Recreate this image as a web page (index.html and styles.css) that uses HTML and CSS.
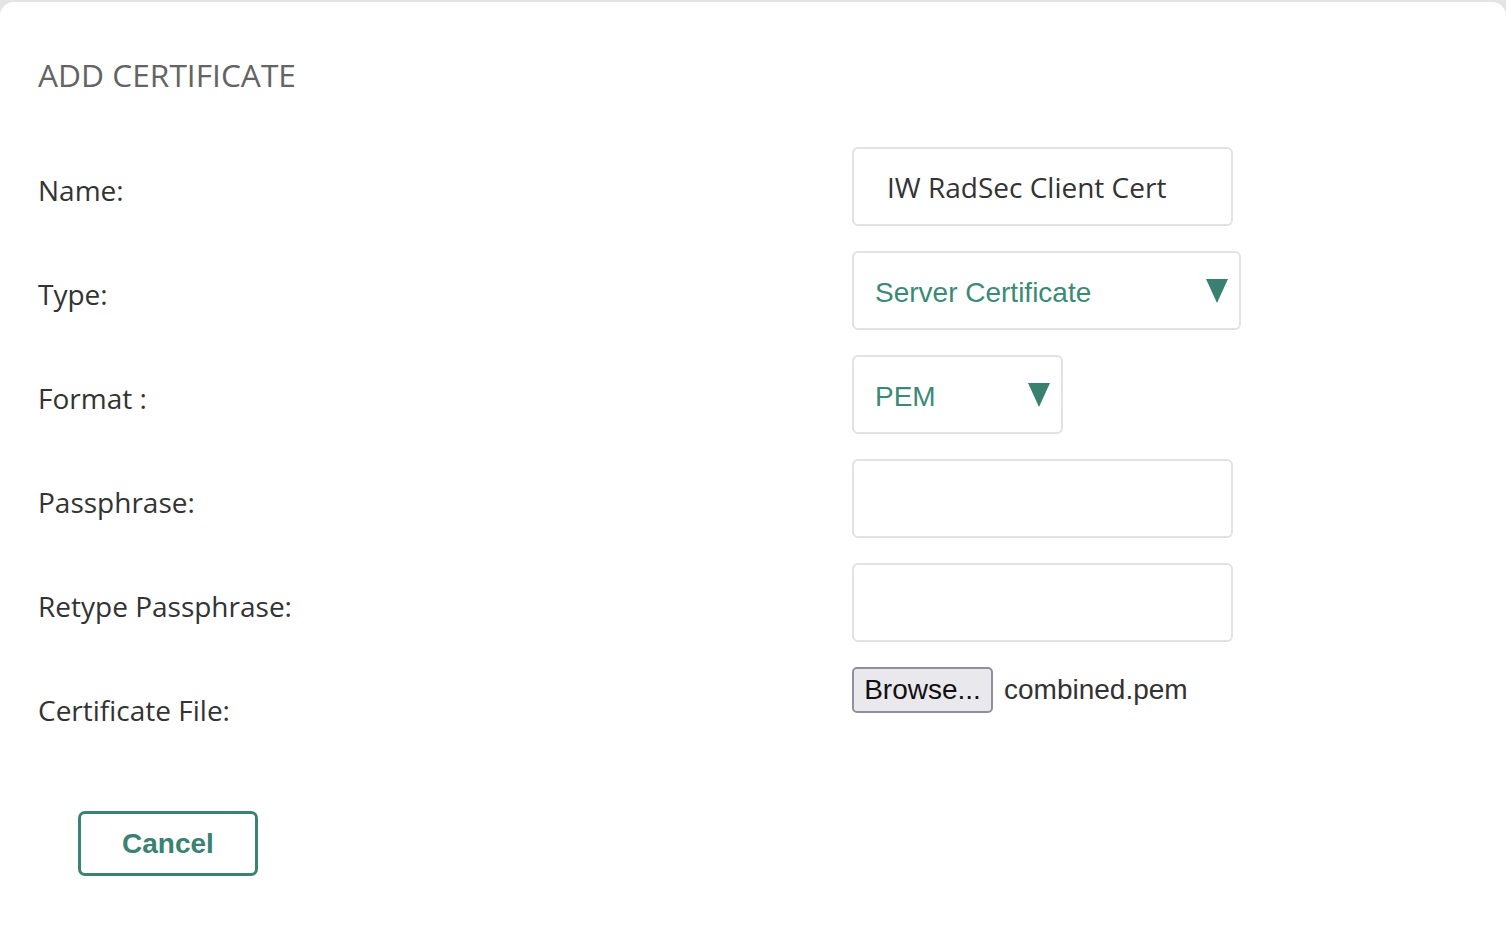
FILE: index.html
```html
<!DOCTYPE html>
<html>
<head>
<meta charset="utf-8">
<link rel="stylesheet" href="styles.css">
</head>
<body>
<div class="card">
  <h1 class="title">ADD CERTIFICATE</h1>
  <div class="form">
    <div class="label">Name:</div>
    <div class="field"><div class="input text">IW RadSec Client Cert</div></div>

    <div class="label">Type:</div>
    <div class="field"><div class="input select wide"><span>Server Certificate</span><span class="arrow"></span></div></div>

    <div class="label">Format :</div>
    <div class="field"><div class="input select small"><span>PEM</span><span class="arrow"></span></div></div>

    <div class="label">Passphrase:</div>
    <div class="field"><div class="input"></div></div>

    <div class="label">Retype Passphrase:</div>
    <div class="field"><div class="input"></div></div>

    <div class="label">Certificate File:</div>
    <div class="field file"><span class="browse">Browse...</span><span class="filename">combined.pem</span></div>
  </div>
  <div class="actions">
    <button class="cancel">Cancel</button>
  </div>
</div>
</body>
</html>
```

FILE: styles.css
```css
html, body {
  margin: 0;
  padding: 0;
  background: #e4e4e4;
  height: 100%;
  overflow: hidden;
}
body {
  padding-top: 2px;
  box-sizing: border-box;
}
.card {
  background: #fff;
  border-radius: 14px 14px 0 0;
  height: 936px;
  padding: 0 38px;
  box-sizing: border-box;
  font-family: "Open Sans", sans-serif;
}
.title {
  margin: 0;
  padding-top: 51px;
  font-size: 31.7px;
  font-weight: 400;
  color: #646464;
  line-height: 44px;
  height: 94px;
}
.form {
  display: grid;
  grid-template-columns: 814px 1fr;
  grid-auto-rows: 79px;
  row-gap: 25px;
}
.label {
  font-size: 28px;
  color: #333;
  line-height: 38px;
  padding-top: 24px;
}
.field {
  display: flex;
  align-items: flex-start;
}
.input {
  box-sizing: border-box;
  width: 381px;
  height: 79px;
  border: 2px solid #e2e2e2;
  border-radius: 6px;
  display: flex;
  align-items: center;
}
.input.text {
  padding-left: 33px;
  font-size: 28px;
  color: #333;
}
.select {
  font-family: "Liberation Sans", Arial, sans-serif;
  font-size: 28px;
  color: #3a8a76;
  padding-left: 21px;
  padding-right: 11px;
  justify-content: space-between;
}
.select > span:first-child {
  padding-top: 4px;
}
.select.wide { width: 389px; }
.select.small { width: 211px; }
.arrow {
  width: 0;
  height: 0;
  border-left: 11px solid transparent;
  border-right: 11px solid transparent;
  border-top: 24px solid #3a8070;
  margin-top: 1px;
}
.file {
  align-items: center;
  height: 46px;
  font-family: "Liberation Sans", Arial, sans-serif;
  font-size: 28px;
}
.browse {
  box-sizing: border-box;
  height: 46px;
  width: 141px;
  border: 2px solid #8f8f9d;
  border-radius: 5px;
  background: #e9e9ed;
  color: #111;
  display: flex;
  align-items: center;
  justify-content: center;
}
.filename {
  margin-left: 11px;
  color: #333;
}
.actions {
  padding-top: 65px;
  padding-left: 40px;
}
.cancel {
  box-sizing: border-box;
  width: 180px;
  height: 65px;
  border: 3px solid #3a8272;
  border-radius: 7px;
  background: #fff;
  color: #3a8272;
  font-family: "Liberation Sans", Arial, sans-serif;
  font-weight: 700;
  font-size: 28px;
  padding: 0;
}
```
